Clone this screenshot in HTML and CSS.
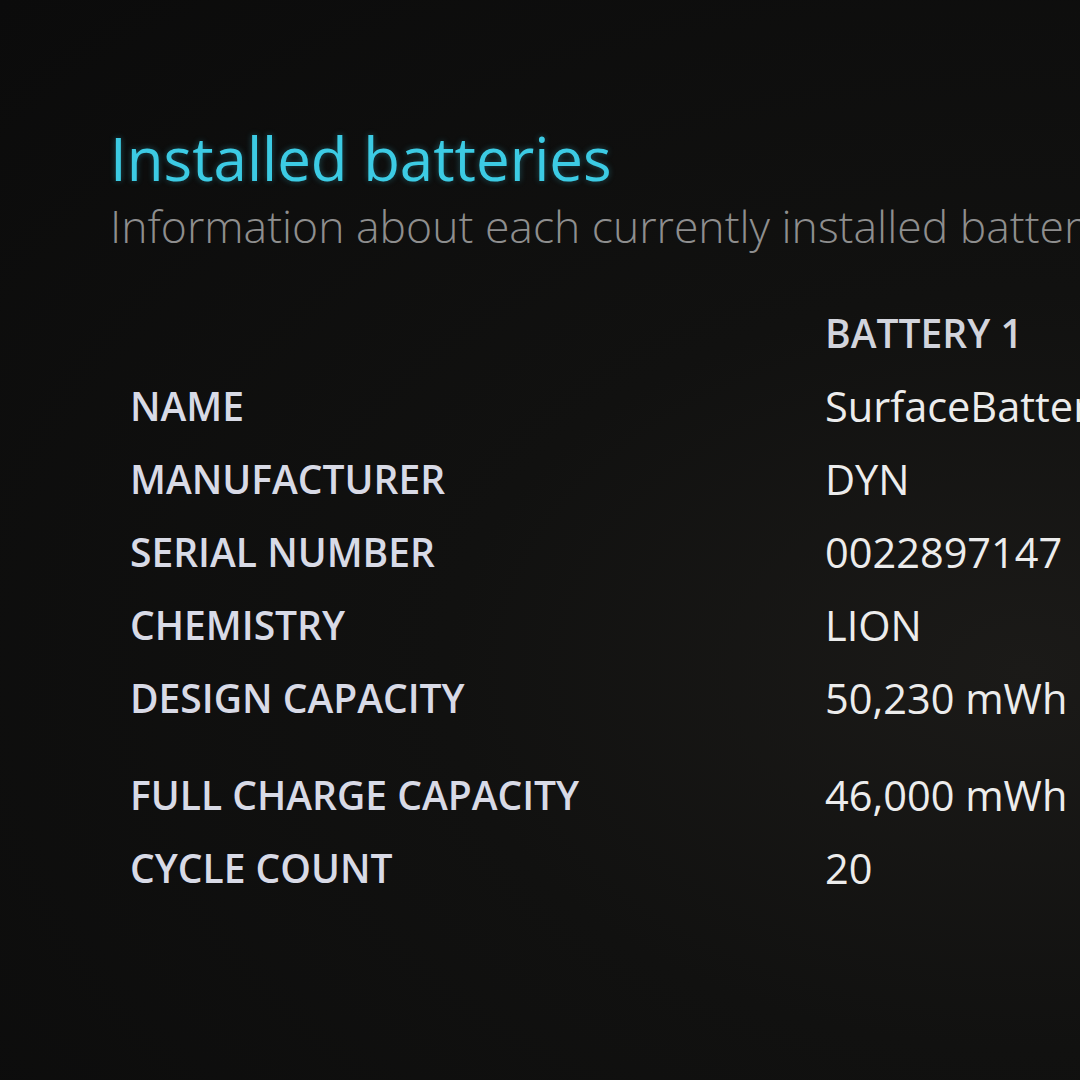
FILE: index.html
```html
<!DOCTYPE html>
<html lang="en">
<head>
    <meta charset="UTF-8">
    <title>Battery report</title>
    <link rel="stylesheet" href="styles.css">
</head>
<body>
    <div class="pagina">
        <h1 class="titulo">Installed batteries</h1>
        <p class="subtitulo">Information about each currently installed battery</p>

        <!-- Tabela de baterias -->
        <table class="baterias">
            <thead>
                <tr>
                    <td class="rotulo"></td>
                    <th>BATTERY 1</th>
                </tr>
            </thead>
            <tbody>
                <tr><td class="rotulo">NAME</td><td class="valor">SurfaceBattery</td></tr>
                <tr><td class="rotulo">MANUFACTURER</td><td class="valor">DYN</td></tr>
                <tr><td class="rotulo">SERIAL NUMBER</td><td class="valor">0022897147</td></tr>
                <tr><td class="rotulo">CHEMISTRY</td><td class="valor">LION</td></tr>
                <tr><td class="rotulo">DESIGN CAPACITY</td><td class="valor">50,230 mWh</td></tr>
                <tr class="espaco"><td class="rotulo">FULL CHARGE CAPACITY</td><td class="valor">46,000 mWh</td></tr>
                <tr><td class="rotulo">CYCLE COUNT</td><td class="valor">20</td></tr>
            </tbody>
        </table>
    </div>
</body>
</html>
```

FILE: styles.css
```css
/* Página escura do relatório */
body {
    margin: 0;
    height: 1080px;
    overflow: hidden;
    font-family: "Open Sans", "Noto Sans", sans-serif;
    background: radial-gradient(ellipse at 95% 62%, #1b1a18 0%, #111110 40%, #0b0b0b 100%);
}

.pagina {
    padding: 120px 0 0 110px;
    width: 1400px;
    white-space: nowrap;
}

/* Título em ciano */
.titulo {
    margin: 0;
    font-size: 60px;
    font-weight: 400;
    line-height: 76px;
    color: #3ccbe4;
    text-shadow: 0 0 6px rgba(60, 203, 228, 0.35);
}

/* Subtítulo cinza claro */
.subtitulo {
    margin: 0;
    font-size: 44.5px;
    font-weight: 300;
    line-height: 60px;
    color: #8e8e8e;
}

/* Tabela */
.baterias {
    margin-top: 40px;
    margin-left: 20px;
    border-collapse: collapse;
}

.baterias td, .baterias th {
    padding: 0;
    height: 73px;
    text-align: left;
    vertical-align: middle;
}

.baterias th {
    font-size: 39px;
    font-weight: 600;
    color: #d2d4dc;
}

.rotulo {
    width: 695px;
    font-size: 39px;
    font-weight: 600;
    color: #d8dae6;
}

.valor {
    font-size: 41.5px;
    font-weight: 400;
    color: #ececec;
}

/* Espaço extra antes da capacidade total */
.espaco td {
    padding-top: 24px;
}
```
